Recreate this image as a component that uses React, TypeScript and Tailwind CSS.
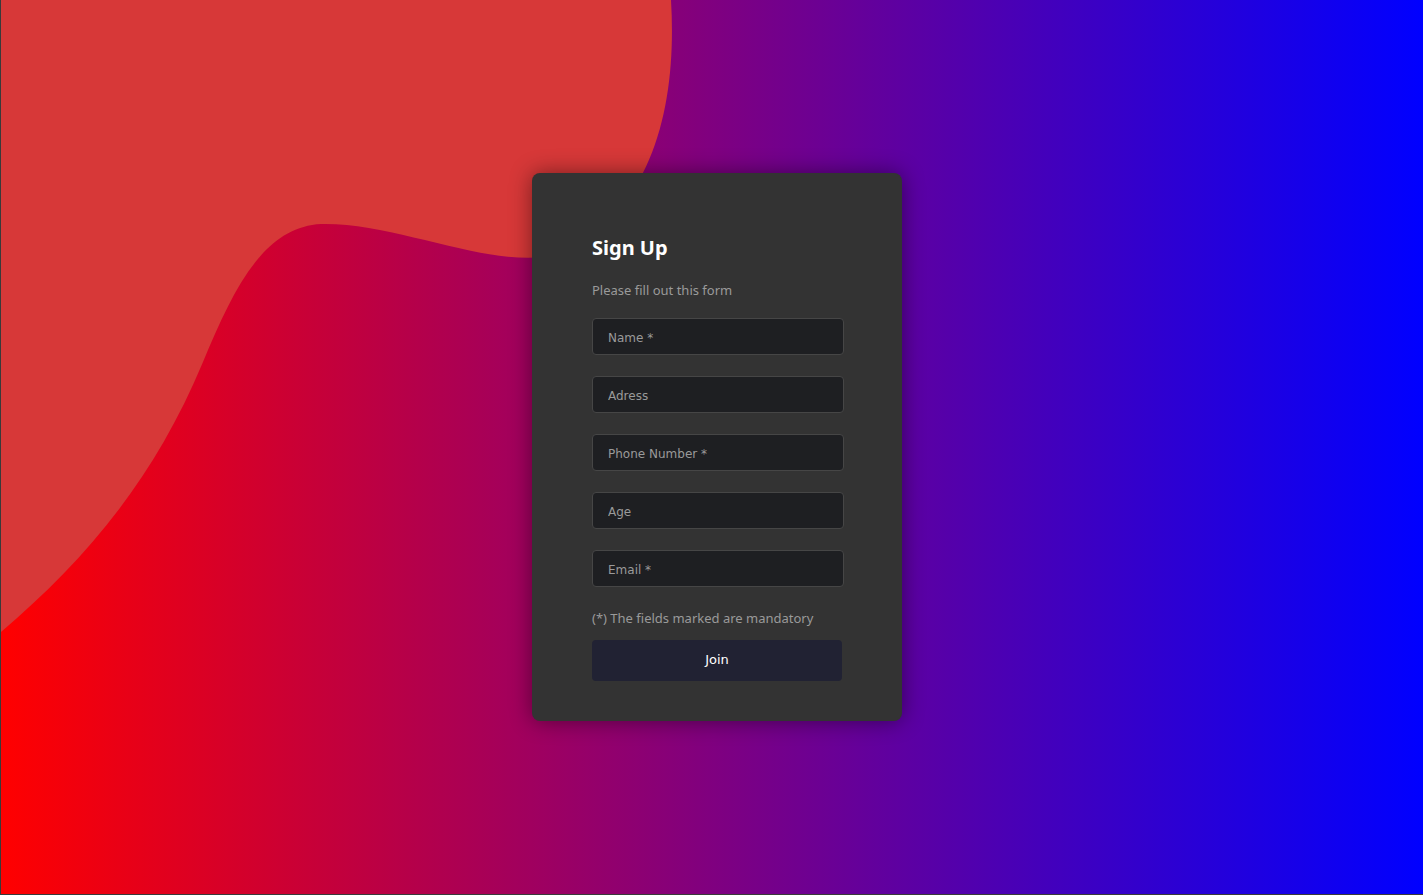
import React from "react";

const fields = ["Name *", "Adress", "Phone Number *", "Age", "Email *"];

// Background blob in the top-left corner
function Blob() {
  return (
    <svg
      className="absolute left-0 top-0"
      width="700"
      height="660"
      viewBox="0 0 700 660"
    >
      <path
        d="M0,0 H670 C676,100 655,205 565,252 C500,275 400,222 320,224 C262,227 232,290 202,362 C152,482 82,562 0,632 Z"
        fill="#d73838"
      />
    </svg>
  );
}

export default function App() {
  return (
    <div className="relative h-[895px] w-full overflow-hidden border-l border-b border-[#3a3a3a] bg-[linear-gradient(to_right,#ff0000,#0000ff)] font-['Noto_Sans',sans-serif]">
      <Blob />

      <div className="relative flex h-full items-center justify-center pb-[1px] pl-[10px]">
        {/* Sign up card */}
        <div className="w-[370px] rounded-lg bg-[#333333] px-[60px] pb-[40px] pt-[60px] shadow-[0_0_22px_rgba(0,0,0,0.45)]">
          <h1 className="text-[20px] font-bold leading-[30px] text-white">Sign Up</h1>
          <p className="mt-[17px] text-[13px] leading-[20px] text-[#9a9a9a]">Please fill out this form</p>

          <form className="mt-[18px] flex flex-col gap-[21px]" onSubmit={e => e.preventDefault()}>
            {fields.map(f => (
              <input
                key={f}
                type="text"
                placeholder={f}
                className="h-[37px] w-[252px] rounded border border-[#464646] bg-[#1e1f22] px-[15px] pt-[3px] font-['DejaVu_Sans',sans-serif] text-[12px] text-white outline-none placeholder:text-[#9a9a9a]"
              />
            ))}
          </form>

          <p className="mt-[21px] text-[13px] leading-[20px] text-[#9a9a9a]">(*) The fields marked are mandatory</p>

          <button
            type="button"
            className="mt-[12px] h-[41px] w-[250px] rounded bg-[#212233] font-['DejaVu_Sans',sans-serif] text-[13px] text-white"
          >
            Join
          </button>
        </div>
      </div>
    </div>
  );
}
